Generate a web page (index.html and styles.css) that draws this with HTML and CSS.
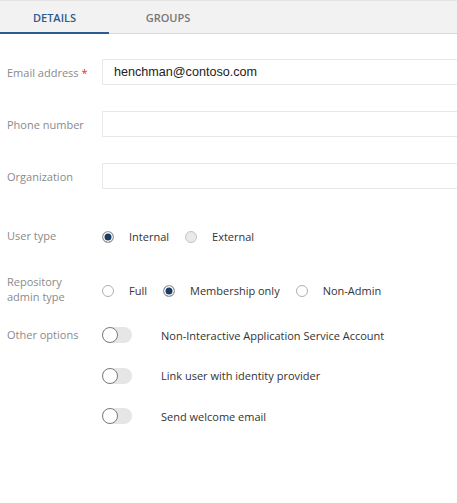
FILE: index.html
```html
<!DOCTYPE html>
<html>
<head>
<meta charset="utf-8">
<link rel="stylesheet" href="styles.css">
</head>
<body>
<div class="tabs">
  <div class="tab active">DETAILS</div>
  <div class="tab">GROUPS</div>
</div>
<div class="form">
  <div class="row field">
    <div class="label">Email address <span class="req">*</span></div>
    <div class="input email">henchman@contoso.com</div>
  </div>
  <div class="row field">
    <div class="label">Phone number</div>
    <div class="input"></div>
  </div>
  <div class="row field">
    <div class="label">Organization</div>
    <div class="input"></div>
  </div>
  <div class="row choice usertype">
    <div class="label">User type</div>
    <div class="options">
      <span class="radio on"></span><span class="opt">Internal</span>
      <span class="radio disabled"></span><span class="opt">External</span>
    </div>
  </div>
  <div class="row choice repo">
    <div class="label">Repository<br>admin type</div>
    <div class="options">
      <span class="radio"></span><span class="opt">Full</span>
      <span class="radio on"></span><span class="opt">Membership only</span>
      <span class="radio"></span><span class="opt">Non-Admin</span>
    </div>
  </div>
  <div class="row toggles">
    <div class="label other">Other options</div>
    <div class="toggle-list">
      <div class="toggle-row"><span class="toggle"></span><span class="tlabel">Non-Interactive Application Service Account</span></div>
      <div class="toggle-row"><span class="toggle"></span><span class="tlabel">Link user with identity provider</span></div>
      <div class="toggle-row"><span class="toggle"></span><span class="tlabel">Send welcome email</span></div>
    </div>
  </div>
</div>
</body>
</html>
```
FILE: styles.css
```css
html, body {
  margin: 0;
  padding: 0;
  background: #fff;
  overflow: hidden;
}
body {
  font-family: "Open Sans", "Noto Sans", sans-serif;
  width: 457px;
  height: 503px;
}
.tabs {
  display: flex;
  height: 32px;
  background: #f2f2f2;
  border-top: 1px solid #e4e4e4;
  border-bottom: 1px solid #d8d8d8;
}
.tab {
  width: 109px;
  display: flex;
  align-items: center;
  justify-content: center;
  font-size: 11px;
  font-weight: 600;
  color: #777;
  box-sizing: border-box;
  padding-top: 1px;
}
.tab + .tab {
  width: 118px;
}
.tab.active {
  color: #2b5c8c;
  border-bottom: 2px solid #2b5c8c;
  margin-bottom: -1px;
  padding-top: 2px;
}
.form {
  display: flex;
  flex-direction: column;
  padding: 25px 0 0 7px;
}
.row {
  display: flex;
}
.label {
  width: 95px;
  flex: none;
  font-size: 11px;
  color: #8a8a8a;
  line-height: 15px;
}
.req {
  color: #e03030;
}
.field {
  align-items: center;
  height: 26px;
  margin-bottom: 26px;
}
.input {
  flex: 1;
  height: 26px;
  box-sizing: border-box;
  border: 1px solid #e8e8e8;
  border-right: none;
  font-family: "Liberation Sans", Arial, sans-serif;
  font-size: 12.6px;
  color: #222;
  padding-left: 11px;
  display: flex;
  align-items: center;
}
.choice {
  align-items: center;
}
.usertype {
  margin-top: 10px;
  height: 20px;
}
.repo {
  margin-top: 27px;
  height: 34px;
}
.options {
  display: flex;
  align-items: center;
  font-size: 11px;
  color: #333;
  padding-top: 3px;
}
.radio {
  width: 12px;
  height: 12px;
  border-radius: 50%;
  border: 1px solid #b0b0b0;
  box-sizing: border-box;
  background: #fff;
  flex: none;
  margin-right: 15px;
}
.radio.on {
  background: #1c3d63;
  border: 1px solid #a8a8a8;
  box-shadow: inset 0 0 0 1.5px #fff;
}
.radio.disabled {
  background: #eaeaea;
  border-color: #c4c4c4;
}
.opt {
  margin-right: 16px;
}
.toggles {
  margin-top: 21px;
}
.toggle-list {
  display: flex;
  flex-direction: column;
  gap: 24.5px;
}
.toggle-row {
  display: flex;
  align-items: center;
  height: 16px;
}
.toggle {
  position: relative;
  width: 30px;
  height: 16px;
  border-radius: 8px;
  background: #e6e6e6;
  flex: none;
  margin-right: 29px;
}
.toggle::after {
  content: "";
  position: absolute;
  left: 0;
  top: 0;
  width: 16px;
  height: 16px;
  box-sizing: border-box;
  border-radius: 50%;
  border: 1.5px solid #7a7a7a;
  background: #fff;
}
.tlabel {
  font-size: 11px;
  color: #333;
}
```
